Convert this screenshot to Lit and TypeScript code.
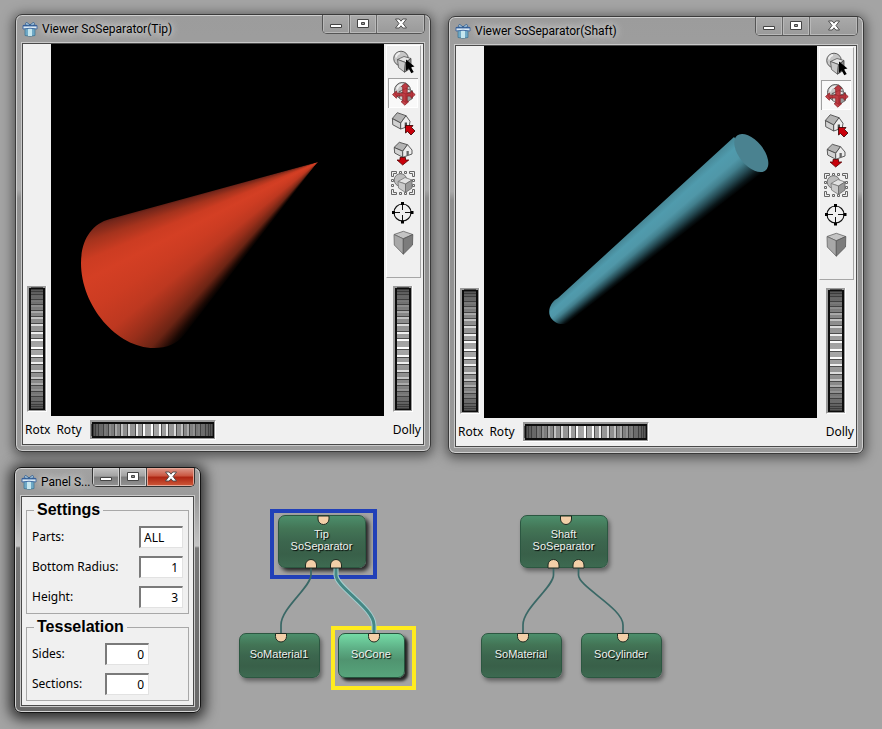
import { LitElement, html, svg, css, nothing } from "lit";
import { customElement, property } from "lit/decorators.js";
import { classMap } from "lit/directives/class-map.js";
import { styleMap } from "lit/directives/style-map.js";

const toolIcons = {
  pick: svg`
    <circle cx="13" cy="10.5" r="7.3" fill="#c6c6c6" stroke="#5c5c5c"/>
    <path d="M8 9.5a5 5 0 0 1 4-4.5" fill="none" stroke="#eee" stroke-width="2"/>
    <path d="M9.5 11.5 16 8.5l7 2-5.5 4z" fill="#e4e4e4" stroke="#555" stroke-width=".8"/>
    <path d="m9.500 11.500 8 3-1 9.700-6-4.700z" fill="#c9c9c9" stroke="#555" stroke-width=".8"/>
    <path d="m17.500 14.500 5.500-4v9.500l-6.500 4.200z" fill="#8d8d8d" stroke="#444" stroke-width=".8"/>
    <path d="M18 11.500 26.500 18.500 23 19.200 25.700 24 23.300 25.300 20.700 20.600 18 23z" fill="#000"/>`,
  view: svg`
    <circle cx="14.500" cy="12.500" r="8" fill="#c6c6c6" stroke="#555"/>
    <path d="M9 11.500a6 6 0 0 1 5-5" fill="none" stroke="#eee" stroke-width="2"/>
    <path d="m11 13.500 7-3 6.500 2.500-6.500 3z" fill="#e6e6e6" stroke="#555" stroke-width=".8"/>
    <path d="m11 13.500 7 2.500v8.500l-6.500-4z" fill="#cfcfcf" stroke="#555" stroke-width=".8"/>
    <path d="m18 16 6.500-3v7.500l-6.500 4z" fill="#9a9a9a" stroke="#555" stroke-width=".8"/>
    <path d="m17.300 5.200 3.400 3.300-1.500.6v6.100h3.500l.6-2.200 3.900 3.600-3.900 3.700-.6-2.200h-3.500v5l1.500.6-3.900 3.500-3.700-3.500 1.600-.6v-5H9l-.6 2.200-3.900-3.700 3.900-3.600.6 2.200h5.700V9.100l-1.300-.6z" fill="#b9202a" fill-opacity=".84" stroke="#84191c" stroke-width=".7"/>`,
  home: svg`
    <path d="m4.300 10.500 5-5.800L18 7.700 12.700 15z" fill="#b4b4b4" stroke="#4c4c4c" stroke-width=".9"/>
    <path d="M4.500 10.700 12.700 15v6l-8-4.300z" fill="#d2d2d2" stroke="#4c4c4c" stroke-width=".9"/>
    <path d="m18 7.700 4 5.600-.7 4.700-8.600 3v-6z" fill="#ececec" stroke="#4c4c4c" stroke-width=".9"/>
    <path d="M16.700 14.500h2.300v4.700l-2.300.8z" fill="#4a4a4a"/>
    <path d="M17.500 17.500h7.500l-1.500 2 3.500 3.500-4 4-3.500-3.500-2 1.500z" fill="#c9000a" stroke="#300" stroke-width=".8"/>`,
  setHome: svg`
    <path d="m6 9.500 5.300-5.200 8.200 2.400-4.800 6.500z" fill="#b4b4b4" stroke="#4c4c4c" stroke-width=".9"/>
    <path d="m6.200 9.500 8.500 3.700v6.100l-8-4.300z" fill="#d2d2d2" stroke="#4c4c4c" stroke-width=".9"/>
    <path d="m19.500 6.700 4.500 5.300v4l-9.300 3.300v-6.100z" fill="#ececec" stroke="#4c4c4c" stroke-width=".9"/>
    <path d="M18.500 13h2.300v4l-2.300.8z" fill="#666"/>
    <path d="M12 19.500h5.500V22h3.300L14.700 27 9 22h3z" fill="#c9000a" stroke="#500" stroke-width=".8"/>`,
  viewAll: svg`
    <g fill="none" stroke="#666" stroke-width="1">
      <path d="M3.500 8.500v-5h5v2h-3v3zM26.500 8.500v-5h-5v2h3v3zM3.500 21.500v5h5v-2h-3v-3zM26.500 21.500v5h-5v-2h3v-3z" fill="#eee"/>
      <path d="M11.500 3.500h2v2h-2zM16.500 3.500h2v2h-2zM11.500 24.500h2v2h-2zM16.500 24.500h2v2h-2zM3.500 11.500h2v2h-2zM3.500 16.500h2v2h-2zM24.500 11.500h2v2h-2zM24.500 16.500h2v2h-2z"/>
    </g>
    <circle cx="12.500" cy="12" r="6.300" fill="#bdbdbd" stroke="#777"/>
    <path d="m10 13.500 7-4 7 2.500-6.500 4z" fill="#e2e2e2" stroke="#777" stroke-width=".8"/>
    <path d="m10 13.500 7.500 2.500v8.500l-7-4.500z" fill="#cacaca" stroke="#777" stroke-width=".8"/>
    <path d="m17.500 16 6.500-4v8l-6.500 4.500z" fill="#9a9a9a" stroke="#666" stroke-width=".8"/>`,
  seek: svg`
    <circle cx="14.500" cy="14.500" r="8.500" fill="none" stroke="#111" stroke-width="1.100"/>
    <path d="M14.500 5v7M14.500 17v7M5 14.500h7M17 14.500h7" stroke="#111"/>
    <path d="M13 4h3v3h-3zM13 22.500h3v3h-3zM4 13h3v3H4zM22.500 13h3v3h-3z" fill="#000"/>`,
  projection: svg`
    <path d="m15.300 3.300 9.500 3.200-9.500 4.300L6 6.500z" fill="#c4c4c4" stroke="#666" stroke-width=".8"/>
    <path d="m6 6.500 9.300 4.300v15.400L6.300 17z" fill="#a8a8a8" stroke="#666" stroke-width=".8"/>
    <path d="m24.800 6.500-9.500 4.300v15.400l9.200-9.200z" fill="#7c7c7c" stroke="#555" stroke-width=".8"/>`,
};

const tools: [keyof typeof toolIcons, string][] = [
  ["pick", "Pick"],
  ["view", "View"],
  ["home", "Home"],
  ["setHome", "Set home"],
  ["viewAll", "View all"],
  ["seek", "Seek"],
  ["projection", "Projection"],
];

@customElement("app-window")
class AppWindow extends LitElement {
  @property() heading = "";
  @property({ type: Boolean, reflect: true }) active = false;

  static styles = css`
    :host {
      display: flex;
      flex-direction: column;
      box-sizing: border-box;
      border: 1px solid #3a3a3a;
      border-radius: 7px;
      padding: 0 5px 5px;
      background: linear-gradient(#9c9c9c, #a2a2a2 130px, #a9a9a9 40%, #8e8e8e 42%, #9a9a9a);
      box-shadow: inset 0 0 0 1px #cfcfcf, 0 2px 12px 2px rgba(0, 0, 0, 0.5);
      font: 12px/16px Roboto, "Noto Sans", sans-serif;
      color: #000;
    }
    :host([active]) {
      border-color: #151515;
      background: linear-gradient(#a2a2a2, #9a9a9a 30px, #c4c4c4 78px, #777 80px, #686868);
      box-shadow: inset 0 0 0 1px #d4d4d4, 0 2px 14px 4px rgba(0, 0, 0, 0.75);
    }
    .bar {
      display: flex;
      align-items: flex-start;
      height: 27px;
      flex: none;
    }
    .logo {
      flex: none;
      width: 16px;
      height: 16px;
      margin: 6px 4px 0 1px;
    }
    .heading {
      flex: 1;
      min-width: 0;
      margin: 6px 0 0;
      font: inherit;
      white-space: nowrap;
      text-shadow: 0 0 6px #ddd, 0 0 8px #ddd;
    }
    .controls {
      display: flex;
      flex: none;
      border: 1px solid #555;
      border-top: 0;
      border-radius: 0 0 5px 5px;
      overflow: hidden;
    }
    .control {
      display: grid;
      place-items: center;
      width: 27px;
      height: 18px;
      padding: 0;
      border: 0;
      border-right: 1px solid #666;
      background: linear-gradient(#aaa, #9a9a9a);
      box-shadow: inset 0 0 0 1px #b9b9b9;
    }
    .control.close {
      width: 47px;
      border: 0;
    }
    :host([active]) .controls {
      border-color: #333;
    }
    :host([active]) .control {
      background: linear-gradient(#c2c2c2, #a2a2a2 45%, #7c7c7c 50%, #929292);
      box-shadow: inset 0 0 0 1px #cfcfcf;
      border-color: #444;
    }
    :host([active]) .control.close {
      background: linear-gradient(#dd9a8c, #c9553f 45%, #ac2412 50%, #cf5a3a);
      box-shadow: inset 0 0 0 1px #e6a797;
    }
    .client {
      flex: 1;
      display: flex;
      flex-direction: column;
      border: 1px solid #4a4a4a;
      outline: 1px solid #c9c9c9;
      background: #f0f0f0;
      margin: 1px;
    }
  `;

  render() {
    return html`
      <header class="bar">
        <svg class="logo" viewBox="0 0 16 16" aria-hidden="true">
          <path d="M3 6h10v8.500q-5 1.500-10 0z" fill="#6fa9c6" stroke="#39718f" stroke-width=".7"/>
          <path d="M6 6h4v9H6z" fill="#c5e6ee"/>
          <path d="M1 4.500q7-2 14 0V8q-7-1.500-14 0z" fill="#dcebf5" stroke="#39639c" stroke-width=".9"/>
          <path d="M1 4.700 15 4.700" stroke="#355f9b" stroke-width="1.400"/>
          <path d="M8 4Q4 0 3.500 2.500T8 4q4-4 4.500-1.500T8 4z" fill="#a8c8df" stroke="#2f5b8d" stroke-width=".8"/>
        </svg>
        <h2 class="heading">${this.heading}</h2>
        <div class="controls">
          <button class="control" aria-label="Minimize">
            <svg width="14" height="12"><path d="M1.500 6.500h11v3h-11z" fill="#fff" stroke="#444"/></svg>
          </button>
          <button class="control" aria-label="Maximize">
            <svg width="14" height="12">
              <path d="M1.500 1.500h11v8h-11zM5.500 4.500v2h3v-2z" fill="#fff" fill-rule="evenodd" stroke="#444"/>
            </svg>
          </button>
          <button class="control close" aria-label="Close">
            <svg width="14" height="12">
              <path d="M1.500 1h3.700L7 3.200 8.800 1h3.700L9 5.500l3.500 4.500H8.800L7 7.800 5.200 10H1.500L5 5.500z" fill="#fff" stroke="#444" stroke-width=".9"/>
            </svg>
          </button>
        </div>
      </header>
      <div class="client"><slot></slot></div>
    `;
  }
}

@customElement("thumb-wheel")
class ThumbWheel extends LitElement {
  @property() name = "";
  @property({ type: Boolean, reflect: true }) vertical = false;

  static styles = css`
    :host {
      display: block;
      position: relative;
      width: 126px;
      height: 20px;
    }
    :host([vertical]) {
      width: 20px;
      height: 126px;
    }
    .drawing {
      display: block;
      width: 100%;
      height: 100%;
    }
    .input {
      position: absolute;
      inset: 0;
      width: 100%;
      height: 100%;
      margin: 0;
      opacity: 0;
    }
  `;

  render() {
    const ridges = [];
    for (let k = -11; k <= 11; k++) {
      const at = Math.round(62 + 59 * Math.sin((k * 7.6 * Math.PI) / 180));
      const glow = Math.pow(Math.cos((k * 7.6 * Math.PI) / 180), 5);
      ridges.push(svg`
        <path d=${`M${at} 4v12`} stroke="#fff" stroke-width="2" stroke-opacity=${glow.toFixed(2)}/>
        <path d=${`M${at + (k < 0 ? -1.5 : 1.5)} 4v12`} stroke="#333" stroke-opacity=".75"/>
      `);
    }
    const id = `shade-${this.vertical ? "v" : "h"}`;
    return html`
      <svg class="drawing" viewBox=${this.vertical ? "0 0 20 126" : "0 0 126 20"} aria-hidden="true">
        <defs>
          <linearGradient id=${id}>
            <stop offset="0" stop-color="#555"/>
            <stop offset=".2" stop-color="#868686"/>
            <stop offset=".5" stop-color="#a8a8a8"/>
            <stop offset=".8" stop-color="#868686"/>
            <stop offset="1" stop-color="#555"/>
          </linearGradient>
        </defs>
        <g transform=${this.vertical ? "matrix(0 1 1 0 0 0)" : "translate(0 0)"}>
          <path d="M0 0h126v20H0z" fill="#fff"/>
          <path d="M0 0h126l-1 1v18H0z" fill="#9a9a9a"/>
          <path d="M2 2h122v16H2z" fill="#0c0c0c"/>
          <path d="M3 4h120v12H3z" fill="url(#${id})"/>
          ${ridges}
        </g>
      </svg>
      <input class="input" type="range" aria-label=${this.name} />
    `;
  }
}

@customElement("scene-viewer")
class SceneViewer extends LitElement {
  @property() shape: "cone" | "cylinder" = "cone";

  static styles = css`
    :host {
      flex: 1;
      display: grid;
      grid-template: 1fr 28px / 28px 1fr 39px;
      font: 12px/16px "Noto Sans", sans-serif;
    }
    .left,
    .right {
      display: flex;
      flex-direction: column;
      justify-content: flex-end;
      padding: 1px 2px 4px 4px;
    }
    .right {
      justify-content: space-between;
    }
    .right .wheel {
      margin-left: 5px;
    }
    .canvas {
      background: #000;
      min-width: 0;
    }
    .scene {
      display: block;
      width: 100%;
      height: 100%;
    }
    .cone {
      width: 333px;
      height: 372px;
      clip-path: path("M267 118 L59 175 C40 180 30 197 30 219 C30 262 66 304 103 304 C116 304 126 300 134 290 Z");
      background: conic-gradient(at 267px 118px, #000 217.5deg, #1c0904 219deg, #6b2414 222deg, #962e1a 226deg, #bd3820 231deg, #cc3c22 237deg, #d43f24 243deg, #cc3c22 247deg, #a5331d 251deg, #74261a 254deg, #541b12 255deg);
    }
    .cylinder {
      width: 333px;
      height: 372px;
      clip-path: path("M250 91 L74 252 C66 256 63 266 67 272 C71 278 79 280 85 276 L279 126 Z");
      background: conic-gradient(at -132px 443px, #3a7280 46.8deg, #478796 47.3deg, #509bad 48.3deg, #5097a8 49.4deg, #427f8d 50.2deg, #254a53 51.1deg, #0a1619 51.9deg, #000 52.4deg);
    }
    .tools {
      display: flex;
      flex-direction: column;
      box-sizing: border-box;
      width: 35px;
      height: 233px;
      margin-left: -2px;
      padding: 2px 0 0 1px;
      border: 1px solid #fff;
      border-right-color: #a6a6a6;
      border-bottom-color: #a6a6a6;
    }
    .tool {
      box-sizing: border-box;
      width: 30px;
      height: 30px;
      padding: 0;
      border: 0;
      background: none;
    }
    .tool.on {
      background: #f9f9f9;
      box-shadow: inset 1px 1px #a0a0a0, inset -1px -1px #fff;
    }
    .icon {
      display: block;
      width: 30px;
      height: 30px;
    }
    .foot {
      grid-column: 1 / -1;
      display: flex;
      align-items: center;
      gap: 6px;
      padding: 0 2px;
    }
    .roty {
      margin-left: 2px;
    }
    .push {
      margin-left: auto;
    }
  `;

  render() {
    return html`
      <div class="left"><thumb-wheel class="wheel" name="Rotx" vertical></thumb-wheel></div>
      <div class="canvas">
        <svg class="scene" viewBox="0 0 333 372" role="img" aria-label=${this.shape}>
          <foreignObject width="333" height="372"><div class=${this.shape}></div></foreignObject>
          ${this.shape === "cylinder"
            ? svg`<ellipse cx="267.300" cy="107" rx="22.500" ry="12.200" transform="rotate(51 267.300 107)" fill="#4a8290"/>`
            : nothing}
        </svg>
      </div>
      <div class="right">
        <div class="tools" role="toolbar">
          ${tools.map(
            ([key, label]) => html`
              <button class=${classMap({ tool: true, on: key === "view" })} aria-label=${label}>
                <svg class="icon" viewBox="0 0 30 30">${toolIcons[key]}</svg>
              </button>
            `,
          )}
        </div>
        <thumb-wheel class="wheel" name="Dolly" vertical></thumb-wheel>
      </div>
      <div class="foot">
        <span>Rotx</span>
        <span>Roty</span>
        <thumb-wheel class="roty" name="Roty"></thumb-wheel>
        <span class="push">Dolly</span>
      </div>
    `;
  }
}

@customElement("settings-panel")
class SettingsPanel extends LitElement {
  static styles = css`
    :host {
      flex: 1;
      display: flex;
      flex-direction: column;
      gap: 4px;
      padding: 4px;
      font: 12px/16px "Noto Sans", sans-serif;
    }
    .group {
      display: grid;
      gap: 8px;
      min-width: 0;
      margin: 0;
      padding: 7px 5px 5px;
      border: 1px solid #a8a8a8;
    }
    .legend {
      margin-left: 2px;
      padding: 0 3px;
      font: bold 16px/18px "Liberation Sans", Arial, sans-serif;
    }
    .row {
      display: grid;
      grid-template-columns: 1fr 44px;
      align-items: center;
    }
    .group.short .row {
      grid-template-columns: 73px 44px;
    }
    .field {
      box-sizing: border-box;
      width: 100%;
      height: 22px;
      padding: 0 4px;
      border: 1px solid #fff;
      border-top: 2px solid #7a7a7a;
      border-left: 2px solid #7a7a7a;
      border-right-color: #e2e2e2;
      border-bottom-color: #e2e2e2;
      background: #fff;
      color: #000;
      font: inherit;
      text-align: right;
    }
    .field.text {
      padding: 0 3px;
      text-align: left;
    }
  `;

  private row(id: string, label: string, value: string) {
    return html`
      <div class="row">
        <label for=${id}>${label}</label>
        <input id=${id} class=${classMap({ field: true, text: id === "parts" })} type="text" .value=${value} />
      </div>
    `;
  }

  render() {
    return html`
      <fieldset class="group">
        <legend class="legend">Settings</legend>
        ${this.row("parts", "Parts:", "ALL")}
        ${this.row("radius", "Bottom Radius:", "1")}
        ${this.row("height", "Height:", "3")}
      </fieldset>
      <fieldset class="group short">
        <legend class="legend">Tesselation</legend>
        ${this.row("sides", "Sides:", "0")}
        ${this.row("sections", "Sections:", "0")}
      </fieldset>
    `;
  }
}

interface GraphNode {
  lines: string[];
  x: number;
  y: number;
  w: number;
  h: number;
  mark?: "blue" | "yellow";
  lit?: boolean;
}

const nodes: GraphNode[] = [
  { lines: ["Tip", "SoSeparator"], x: 278, y: 515, w: 88, h: 53, mark: "blue" },
  { lines: ["SoMaterial1"], x: 239, y: 633, w: 81, h: 45 },
  { lines: ["SoCone"], x: 338, y: 633, w: 67, h: 45, mark: "yellow", lit: true },
  { lines: ["Shaft", "SoSeparator"], x: 520, y: 515, w: 88, h: 53 },
  { lines: ["SoMaterial"], x: 481, y: 633, w: 81, h: 45 },
  { lines: ["SoCylinder"], x: 581, y: 633, w: 81, h: 45 },
];

const edges = [
  { from: 311, to: 281, lit: false },
  { from: 336, to: 374, lit: true },
  { from: 553.5, to: 523, lit: false },
  { from: 578.5, to: 623, lit: false },
];

@customElement("node-graph")
class NodeGraph extends LitElement {
  static styles = css`
    :host {
      display: block;
      font: 11px/12px "Liberation Sans", Arial, sans-serif;
      color: #eef3ef;
    }
    .node {
      position: absolute;
      box-sizing: border-box;
      display: flex;
      flex-direction: column;
      justify-content: center;
      align-items: center;
      padding-right: 1px;
      padding-bottom: 3px;
      border: 1px solid #2c5741;
      border-radius: 7px;
      background: linear-gradient(#4c8e6b, #437556 25%, #3c664e 50%, #396049 75%, #3d6a51);
      box-shadow: 2px 3px 4px rgba(0, 0, 0, 0.4);
      text-shadow: 1px 1px 1px #000;
    }
    .node.raised {
      box-shadow: 3px 3px 4px rgba(0, 0, 0, 0.8);
    }
    .node.lit {
      border-color: #25543d;
      background: linear-gradient(#74dba6, #5dae85 35%, #509470 60%, #57a47b);
      box-shadow: 3px 3px 3px #222;
    }
    .mark {
      position: absolute;
      box-sizing: border-box;
      border: 4px solid #2140b8;
    }
    .mark.yellow {
      border-color: #ffeb1f;
    }
    .wires {
      position: absolute;
      left: 0;
      top: 0;
      pointer-events: none;
    }
  `;

  private place(x: number, y: number, w: number, h: number) {
    return styleMap({ left: `${x}px`, top: `${y}px`, width: `${w}px`, height: `${h}px` });
  }

  private socket(x: number, y: number, up: boolean) {
    const r = up ? -1 : 1;
    return svg`<path d=${`M${x - 5.5} ${y}v${3 * r}a5.5 5.5 0 0 ${up ? 1 : 0} 11 0v${-3 * r}z`} fill="#f3cfa8" stroke="#1d2b22"/>`;
  }

  render() {
    return html`
      ${nodes.map(
        (n) => html`
          ${n.mark
            ? html`<div
                class=${`mark ${n.mark}`}
                style=${n.mark === "blue"
                  ? this.place(n.x - 8, n.y - 6, n.w + 19, n.h + 17)
                  : this.place(n.x - 7, n.y - 7, n.w + 18, n.h + 19)}
              ></div>`
            : nothing}
          <div
            class=${classMap({ node: true, raised: n.mark === "blue", lit: !!n.lit })}
            style=${this.place(n.x, n.y, n.w, n.h)}
          >
            ${n.lines.map((l) => html`<span>${l}</span>`)}
          </div>
        `,
      )}
      <svg class="wires" width="700" height="700" aria-hidden="true">
        ${edges.map((e) => {
          const d = `M${e.from} 568V575C${e.from} 587 ${e.to} 608 ${e.to} 625V634`;
          return e.lit
            ? svg`<path d=${d} fill="none" stroke="#a5cfd0" stroke-width="5"/><path d=${d} fill="none" stroke="#458784" stroke-width="3"/>`
            : svg`<path d=${d} fill="none" stroke="#3a6866" stroke-width="1.700"/>`;
        })}
        ${[323.5, 566].map((x) => this.socket(x, 516, false))}
        ${edges.map((e) => [this.socket(e.from, 568, true), this.socket(e.to, 633.5, false)])}
      </svg>
    `;
  }
}

@customElement("app-root")
class AppRoot extends LitElement {
  static styles = css`
    :host {
      display: block;
      position: relative;
      min-height: 100vh;
      overflow: hidden;
      background: #a4a4a4;
    }
    .window {
      position: absolute;
      width: 416px;
      height: 438px;
    }
    .tip {
      left: 15px;
      top: 14px;
    }
    .shaft {
      left: 448px;
      top: 16px;
    }
    .panel {
      left: 14px;
      top: 467px;
      width: 187px;
      height: auto;
    }
  `;

  render() {
    return html`
      <node-graph></node-graph>
      <app-window class="window tip" heading="Viewer SoSeparator(Tip)">
        <scene-viewer shape="cone"></scene-viewer>
      </app-window>
      <app-window class="window shaft" heading="Viewer SoSeparator(Shaft)">
        <scene-viewer shape="cylinder"></scene-viewer>
      </app-window>
      <app-window class="window panel" heading="Panel S..." active>
        <settings-panel></settings-panel>
      </app-window>
    `;
  }
}
